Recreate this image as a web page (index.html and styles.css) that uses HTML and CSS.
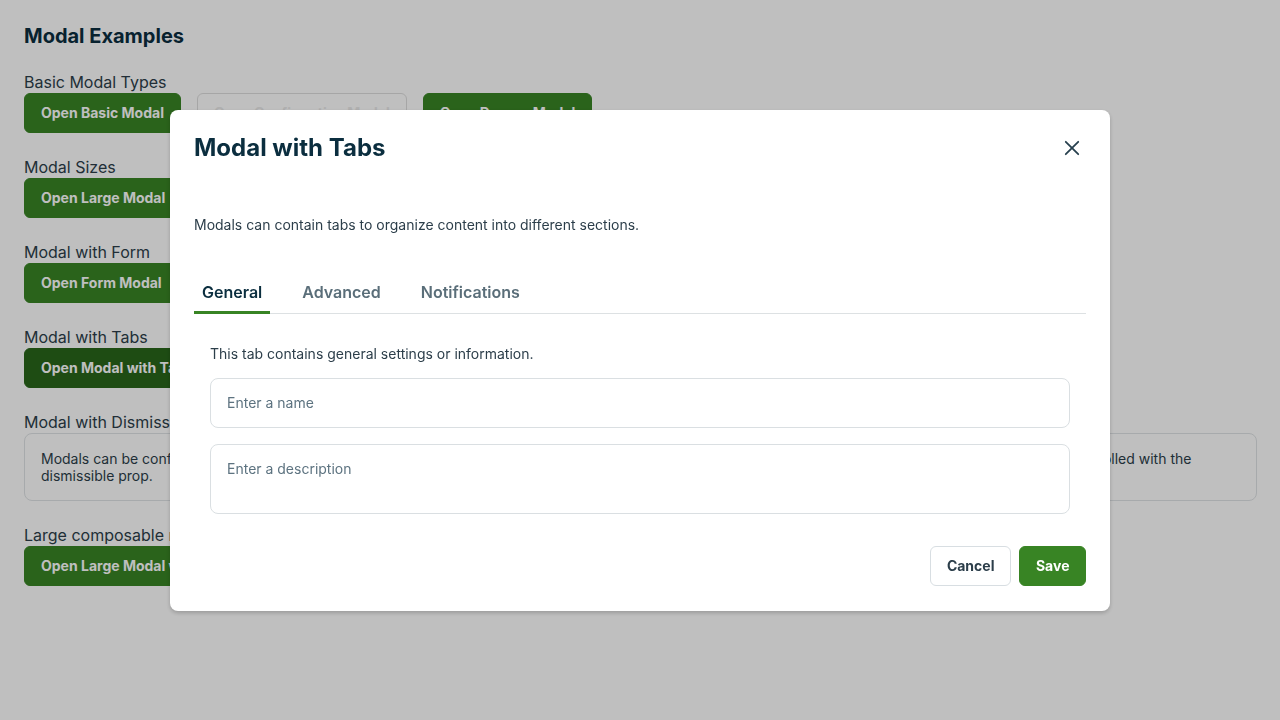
FILE: index.html
```html
<!DOCTYPE html>
<html lang="en">
<head>
<meta charset="utf-8">
<title>Modal Examples</title>
<link rel="stylesheet" href="styles.css">
</head>
<body>
<main class="page">
  <h1 class="page-title">Modal Examples</h1>

  <section class="group">
    <h2 class="group-label">Basic Modal Types</h2>
    <div class="btn-row">
      <button class="btn btn-primary">Open Basic Modal</button>
      <button class="btn btn-outline">Open Confirmation Modal</button>
      <button class="btn btn-primary">Open Danger Modal</button>
    </div>
  </section>

  <section class="group">
    <h2 class="group-label">Modal Sizes</h2>
    <div class="btn-row">
      <button class="btn btn-primary">Open Large Modal</button>
      <button class="btn btn-primary">Open Medium Modal</button>
      <button class="btn btn-primary">Open Small Modal</button>
    </div>
  </section>

  <section class="group">
    <h2 class="group-label">Modal with Form</h2>
    <div class="btn-row">
      <button class="btn btn-primary">Open Form Modal</button>
    </div>
  </section>

  <section class="group">
    <h2 class="group-label">Modal with Tabs</h2>
    <div class="btn-row">
      <button class="btn btn-primary is-active">Open Modal with Tabs</button>
    </div>
  </section>

  <section class="group">
    <h2 class="group-label">Modal with Dismissible Option</h2>
    <div class="note">Modals can be configured to prevent closing when clicking outside or pressing the Escape key. This behavior is useful for critical actions and can be easily controlled with the dismissible prop.</div>
  </section>

  <section class="group">
    <h2 class="group-label">Large composable modal</h2>
    <div class="btn-row">
      <button class="btn btn-primary">Open Large Modal with Sections</button>
    </div>
  </section>
</main>

<div class="overlay">
  <div class="modal" role="dialog" aria-labelledby="modal-title">
    <header class="modal-header">
      <h2 class="modal-title" id="modal-title">Modal with Tabs</h2>
      <button class="modal-close" aria-label="Close">
        <svg width="18" height="18" viewBox="0 0 18 18" fill="none" stroke="currentColor" stroke-width="2" stroke-linecap="round"><path d="M2 2L16 16M16 2L2 16"/></svg>
      </button>
    </header>
    <div class="modal-body">
      <p class="modal-desc">Modals can contain tabs to organize content into different sections.</p>
      <div class="tabs" role="tablist">
        <button class="tab is-selected" role="tab">General</button>
        <button class="tab" role="tab">Advanced</button>
        <button class="tab" role="tab">Notifications</button>
      </div>
      <div class="tab-panel" role="tabpanel">
        <p class="panel-text">This tab contains general settings or information.</p>
        <div class="field">Enter a name</div>
        <div class="field field-area">Enter a description</div>
      </div>
    </div>
    <footer class="modal-footer">
      <button class="btn btn-secondary">Cancel</button>
      <button class="btn btn-save">Save</button>
    </footer>
  </div>
</div>
</body>
</html>
```

FILE: styles.css
```css
* { box-sizing: border-box; }

html, body {
  margin: 0;
  padding: 0;
  background: #ffffff;
  font-family: Inter, "Noto Sans", sans-serif;
  color: #2c3e4a;
}

.page {
  padding: 24px 23px 24px 24px;
}

.page-title {
  margin: 0 0 24px;
  font-size: 20px;
  line-height: 24px;
  font-weight: 700;
  color: #0b2e3f;
}

.group {
  margin-bottom: 24px;
}

.group-label {
  margin: 0 0 1px;
  font-size: 16px;
  line-height: 20px;
  font-weight: 400;
  color: #2c3e4a;
}

.btn-row {
  display: flex;
  gap: 16px;
}

.btn {
  height: 40px;
  padding: 0 16px;
  border-radius: 6px;
  font-family: Inter, "Noto Sans", sans-serif;
  font-size: 14px;
  font-weight: 700;
  line-height: 20px;
  white-space: nowrap;
  cursor: pointer;
}

.btn-primary {
  background: #388424;
  color: #ffffff;
  border: 1px solid #388424;
}

.btn-primary.is-active {
  background: #28661a;
  border-color: #28661a;
}

.btn-outline {
  background: #ffffff;
  color: #eaeaea;
  border: 1px solid #dedede;
}

.note {
  border: 1px solid #dfe3e6;
  border-radius: 8px;
  padding: 16px;
  font-size: 14px;
  line-height: 17px;
  color: #2c3e4a;
}

/* Modal */
.overlay {
  position: fixed;
  inset: 0;
  background: rgba(0, 0, 0, 0.25);
  display: flex;
  align-items: center;
  justify-content: center;
}

.modal {
  width: 940px;
  background: #ffffff;
  border-radius: 8px;
  padding: 24px 24px 25px;
  box-shadow: 0 2px 4px rgba(0, 0, 0, 0.2);
  display: flex;
  flex-direction: column;
}

.modal-header {
  display: flex;
  align-items: center;
  justify-content: space-between;
}

.modal-title {
  margin: 0;
  font-size: 24px;
  line-height: 28px;
  font-weight: 700;
  color: #0b2e3f;
}

.modal-close {
  width: 28px;
  height: 28px;
  padding: 0;
  border: 0;
  background: transparent;
  color: #27404e;
  display: flex;
  align-items: center;
  justify-content: center;
}

.modal-close svg {
  width: 16px;
  height: 16px;
}

.modal-body {
  padding-top: 53px;
}

.modal-desc {
  margin: 0 0 35px;
  font-size: 14px;
  line-height: 20px;
  color: #2c3e4a;
}

.tabs {
  display: flex;
  gap: 24px;
  border-bottom: 1px solid #dde1e3;
}

.tab {
  margin-bottom: -1px;
  padding: 12px 8px 9px;
  border: 0;
  border-bottom: 3px solid transparent;
  background: transparent;
  font-family: Inter, "Noto Sans", sans-serif;
  font-size: 16px;
  line-height: 20px;
  font-weight: 600;
  color: #5a6e79;
}

.tab.is-selected {
  color: #0b2e3f;
  border-bottom-color: #388424;
}

.tab-panel {
  padding: 30px 16px 0;
  display: flex;
  flex-direction: column;
  gap: 16px;
}

.panel-text {
  margin: 0 0 -2px;
  font-size: 14px;
  line-height: 20px;
  color: #2c3e4a;
}

.field {
  height: 50px;
  border: 1px solid #dadfe2;
  border-radius: 8px;
  padding: 15px 16px;
  font-size: 14px;
  line-height: 18px;
  color: #5d7380;
}

.field-area {
  height: 70px;
}

.modal-footer {
  display: flex;
  justify-content: flex-end;
  gap: 8px;
  padding-top: 32px;
}

.btn-secondary {
  background: #ffffff;
  color: #2c3e4a;
  border: 1px solid #d8dee2;
  padding: 0 16px;
}

.btn-save {
  background: #388424;
  color: #ffffff;
  border: 1px solid #388424;
  padding: 0 15.5px;
}
```
